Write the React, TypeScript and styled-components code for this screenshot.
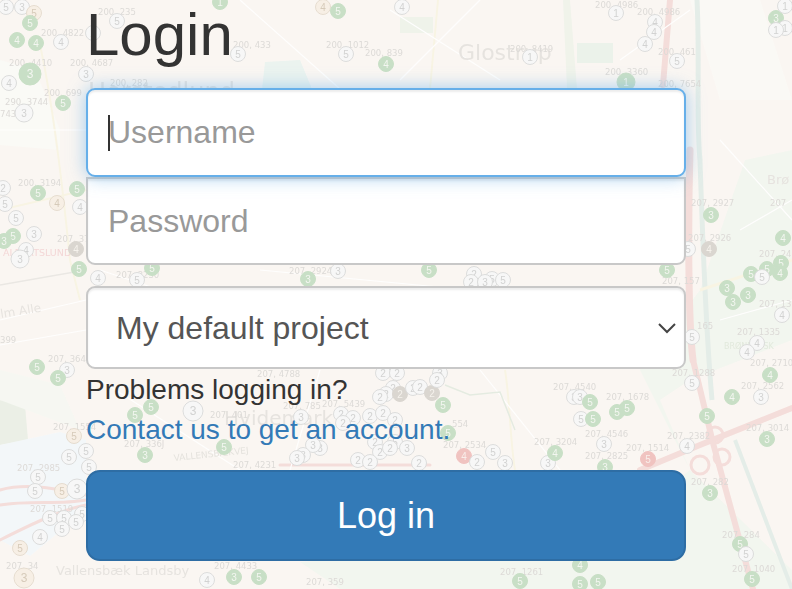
import { useState } from "react";
import styled, { createGlobalStyle } from "styled-components";

const GlobalStyle = createGlobalStyle`
   html, body {
      margin: 0;
      padding: 0;
      height: 100%;
      overflow: hidden;
      background: #faf6f2;
      font-family: "Liberation Sans", Arial, sans-serif;
   }
`;

const Page = styled.div`
   position: relative;
   width: 792px;
   height: 589px;
   overflow: hidden;
`;

const MapLayer = styled.svg`
   position: absolute;
   inset: 0;
   width: 792px;
   height: 589px;
`;

const LoginForm = styled.form`
   position: relative;
   box-sizing: border-box;
   width: 600px;
   margin-left: 86px;
   padding-top: 2px;
   display: flex;
   flex-direction: column;
`;

const Title = styled.h1`
   margin: 0 0 17px;
   font-size: 60px;
   font-weight: 400;
   line-height: 66px;
   height: 69px;
   color: #333;
`;

const TextInput = styled.input<{ $focused?: boolean }>`
   box-sizing: border-box;
   display: block;
   width: 100%;
   height: ${(p) => (p.$focused ? "89px" : "88px")};
   padding: 0 20px;
   font: 32px "Liberation Sans", Arial, sans-serif;
   color: #555;
   background: #fff;
   outline: none;
   border-radius: ${(p) => (p.$focused ? "9px" : "0 0 9px 9px")};
   border: 2px solid ${(p) => (p.$focused ? "#66afe9" : "#c8c8c8")};
   box-shadow: ${(p) =>
      p.$focused
         ? "inset 0 2px 2px rgba(0,0,0,.075), 0 0 18px rgba(102,175,233,.6)"
         : "inset 0 2px 2px rgba(0,0,0,.075)"};
   position: ${(p) => (p.$focused ? "relative" : "static")};
   z-index: ${(p) => (p.$focused ? 1 : "auto")};
   caret-color: #333;

   &::placeholder {
      color: #999;
      opacity: 1;
   }
`;

const Caret = styled.span`
   position: absolute;
   z-index: 2;
   left: 22px;
   top: 115px;
   width: 2px;
   height: 36px;
   background: #333;
`;

const SelectWrap = styled.div`
   position: relative;
   margin-top: 21px;
`;

const ProjectSelect = styled.select`
   box-sizing: border-box;
   display: block;
   width: 100%;
   height: 83px;
   padding: 0 28px;
   font: 32px "Liberation Sans", Arial, sans-serif;
   color: #555;
   background: #fff;
   border: 2px solid #c8c8c8;
   border-radius: 9px;
   box-shadow: inset 0 2px 2px rgba(0, 0, 0, 0.075);
   appearance: none;
   outline: none;
`;

const Chevron = styled.svg`
   position: absolute;
   right: 9px;
   top: 36px;
   width: 20px;
   height: 12px;
   pointer-events: none;
`;

const HelpText = styled.div`
   margin-top: 1px;
   font-size: 28px;
   line-height: 40px;
   color: #333;
`;

const HelpLink = styled.a`
   display: block;
   font-size: 28px;
   line-height: 40px;
   color: #337ab7;
   text-decoration: none;
`;

const SubmitButton = styled.button`
   box-sizing: border-box;
   width: 100%;
   height: 91px;
   margin-top: 20px;
   font: 36px "Liberation Sans", Arial, sans-serif;
   color: #fff;
   background: #337ab7;
   border: 2px solid #2e6da4;
   border-radius: 14px;
`;

type Marker = [number, number, number, "g" | "w" | "r" | "b" | "o", number?];

const markers: Marker[] = [
   // top left
   [6, 7, 5, "w"], [22, 7, 3, "w"], [34, 13, 5, "o"], [30, 23, 5, "g"], [17, 40, 4, "g"], [36, 43, 4, "g"],
   [61, 42, 4, "w"], [30, 74, 3, "g", 11], [9, 83, 4, "w"], [86, 74, 3, "w"], [63, 103, 5, "g"], [24, 113, 3, "w", 9],
   [93, 33, 2, "w"], [117, 21, 5, "w"], [220, 2, 1, "g"],
   // left of the fields
   [3, 188, 2, "w"], [5, 204, 5, "w"], [38, 193, 5, "g"], [77, 189, 5, "g"], [57, 203, 4, "o"], [80, 207, 4, "w"],
   [16, 218, 5, "w"], [34, 234, 3, "w"], [13, 236, 5, "g"], [4, 241, 3, "g"], [26, 250, 4, "w"], [20, 259, 3, "w", 9],
   [76, 249, 4, "b"], [79, 269, 5, "g"],
   // top middle and right
   [238, 54, 5, "w"], [346, 54, 5, "w"], [323, 7, 4, "o"], [338, 11, 5, "g"], [386, 64, 4, "g"], [402, 7, 4, "w"],
   [616, 13, 1, "w"], [655, 22, 4, "w"], [654, 32, 4, "w"], [645, 44, 4, "w"], [530, 57, 1, "w"], [677, 61, 5, "w"],
   [626, 82, 1, "g", 9], [776, 18, 3, "g"], [785, 6, 1, "w"], [785, 28, 1, "w"], [776, 30, 1, "w"],
   // right of the fields
   [711, 215, 3, "g"], [709, 249, 4, "b"], [688, 249, 5, "w"], [783, 238, 4, "g"], [781, 263, 5, "g"], [767, 269, 5, "g"],
   [751, 274, 5, "g"], [762, 277, 5, "w"], [780, 273, 4, "g"], [727, 288, 3, "g"], [748, 295, 3, "g"], [733, 302, 3, "g"],
   [782, 315, 4, "w"], [692, 337, 5, "w"], [757, 343, 4, "w"], [747, 352, 4, "w"], [770, 375, 4, "g"], [692, 383, 5, "w"],
   [732, 397, 4, "g"], [761, 397, 3, "w"], [707, 416, 5, "g"], [767, 439, 3, "g"], [687, 446, 4, "w"], [648, 459, 5, "r"],
   [710, 493, 3, "g"], [740, 544, 5, "g"], [746, 554, 5, "w"], [752, 579, 5, "g"], [598, 582, 5, "g"], [580, 584, 5, "g"],
   [580, 565, 4, "g"], [574, 397, 3, "w"], [580, 397, 3, "w"], [590, 402, 5, "g"], [617, 412, 5, "g"], [627, 408, 5, "g"],
   [581, 419, 5, "w"], [593, 419, 5, "g"], [604, 444, 3, "w"], [605, 467, 3, "g"],
   // lower left
   [37, 367, 5, "g"], [67, 370, 3, "w"], [58, 378, 5, "g"], [135, 415, 5, "g"], [151, 407, 5, "g"], [193, 411, 3, "w", 10],
   [145, 455, 3, "g"], [224, 447, 5, "g"], [74, 436, 5, "o"], [86, 451, 5, "w"], [69, 457, 5, "w"], [89, 467, 5, "w"],
   [38, 477, 5, "w"], [35, 491, 5, "w"], [62, 491, 5, "o"], [77, 489, 3, "w", 10], [82, 514, 5, "w"], [50, 518, 5, "w"],
   [64, 518, 5, "w"], [76, 522, 5, "w"], [62, 529, 5, "w"], [40, 537, 4, "w"], [20, 548, 5, "o"], [24, 578, 3, "o", 10],
   [207, 580, 4, "w"], [234, 577, 3, "g"], [259, 577, 5, "g"],
   // band between select and button
   [443, 405, 5, "g"], [448, 433, 5, "g"], [464, 456, 4, "r"], [493, 452, 5, "w"], [505, 463, 3, "w"], [548, 463, 3, "w"],
   [555, 453, 4, "g"], [477, 462, 2, "w"], [520, 581, 5, "g"],
   [383, 373, 2, "w"], [397, 373, 2, "w"], [393, 388, 2, "w"], [386, 394, 2, "w"], [380, 397, 2, "w"], [400, 394, 2, "b"],
   [413, 388, 2, "w"], [420, 387, 2, "w"], [432, 393, 2, "b"], [440, 373, 3, "w"], [437, 380, 2, "w"],
   [341, 414, 2, "w"], [353, 418, 2, "w"], [370, 416, 2, "w"], [383, 413, 2, "w"], [395, 420, 2, "w"], [343, 423, 2, "w"],
   [301, 417, 3, "w"], [320, 448, 3, "w"], [313, 445, 3, "w"], [303, 455, 3, "w"], [297, 458, 3, "w"], [375, 442, 2, "w"],
   [395, 442, 5, "w"], [407, 448, 3, "w"], [380, 452, 2, "w"], [390, 448, 2, "w"], [419, 463, 2, "w"], [358, 460, 2, "w"],
   [370, 462, 2, "w"],
   // band between password and select
   [98, 278, 4, "w"], [152, 268, 5, "g"], [137, 280, 5, "w"], [338, 271, 3, "w"], [308, 279, 3, "g"], [429, 270, 5, "g"],
   [474, 274, 2, "w"], [492, 279, 5, "w"], [471, 282, 2, "w"], [485, 282, 3, "w"], [503, 280, 5, "w"], [667, 270, 5, "g"],
];

const labels: [number, number, string][] = [
   [98, 15, "200, 235"], [41, 36, "200, 4822"], [9, 66, "200, 4410"], [70, 66, "200, 4687"], [44, 96, "200, 699"],
   [5, 105, "290, 3744"], [0, 117, "743"], [233, 48, "200, 433"], [326, 48, "200, 1012"], [365, 56, "200, 839"],
   [18, 186, "200, 3194"], [57, 242, "207, 37"], [110, 86, "200, 282"], [0, 343, "399"], [48, 362, "207, 3644"],
   [116, 278, "207, 3230"], [289, 274, "207, 2924"], [691, 206, "207, 2927"], [688, 241, "207, 2926"],
   [770, 206, "207"], [759, 257, "207, 24"], [662, 284, "207, 157"], [759, 307, "207, 13"], [737, 335, "207, 1335"],
   [750, 366, "207, 2710"], [741, 389, "207, 2562"], [672, 376, "207, 1288"], [553, 390, "207, 4540"], [606, 400, "207, 1678"],
   [585, 437, "207, 4546"], [626, 451, "207, 1514"], [667, 439, "207, 2382"], [585, 459, "207, 2825"], [746, 431, "207, 3014"],
   [691, 485, "207, 282"], [722, 538, "207, 284"], [732, 572, "207, 1040"], [697, 329, "165"],
   [283, 409, "207, 785"], [322, 407, "207, 5439"], [452, 427, "554"], [443, 448, "207, 2534"], [534, 445, "207, 3204"],
   [257, 377, "207, 4788"], [595, 8, "200, 4986"], [637, 15, "200, 4986"], [510, 52, "200, 8419"], [605, 75, "200, 3360"],
   [658, 55, "200, 461"], [658, 87, "200, 7654"], [17, 471, "207, 2985"], [30, 512, "207, 1519"], [53, 430, "207, 1554"],
   [124, 447, "207, 336J"], [210, 418, "207, 401"], [6, 569, "207, 34"], [214, 569, "207, 4433"], [306, 585, "207, 359"],
   [500, 575, "207, 1261"], [233, 468, "207, 4231"],
];

const placeNames: [number, number, string, number][] = [
   [458, 60, "Glostrup", 22],
   [56, 575, "Vallensbæk Landsby", 13],
   [224, 425, "Hvidemark", 20],
   [767, 184, "Brø", 13],
   [88, 100, "Herstedlund", 24],
];

const markerStyle = {
   g: { fill: "#c2dcc0", stroke: "#c2dcc0", text: "#f3f7f1" },
   w: { fill: "#f7f8f8", stroke: "#d8d9d9", text: "#cdcece" },
   r: { fill: "#efbcba", stroke: "#efbcba", text: "#f9eeea" },
   b: { fill: "#d6d2cc", stroke: "#d6d2cc", text: "#f5f2ec" },
   o: { fill: "#f7efe4", stroke: "#e3d9cb", text: "#d2c5b2" },
};

const ChevronIcon = () => (
   <Chevron viewBox="0 0 20 12">
      <path d="M2 2 L10 10 L18 2" fill="none" stroke="#444" strokeWidth="2" />
   </Chevron>
);

const CityMap = () => (
   <MapLayer viewBox="0 0 792 589">
      <defs>
         <filter id="soft">
            <feGaussianBlur stdDeviation="0.45" />
         </filter>
      </defs>
      <rect width="792" height="589" fill="#faf6f2" />
      <g filter="url(#soft)" opacity="0.88">
         {/* parks and woods */}
         <path d="M0 60 L35 70 L60 130 L60 150 L0 145 Z" fill="#fafbf7" />
         <path d="M0 400 L25 405 L28 440 L0 445 Z" fill="#e9efe5" />
         <path d="M0 370 L60 385 L80 430 L0 400 Z" fill="#f6f8f2" />
         <path d="M0 445 L60 432 L86 440 L86 510 L30 556 L0 540 Z" fill="#f3f8fb" />
         <path d="M400 17 L433 17 L433 33 L400 33 Z" fill="#eef3ea" />
         <path d="M563 0 L570 0 L577 89 L567 89 Z" fill="#eff3ea" />
         <path d="M577 43 L613 43 L613 63 L577 63 Z" fill="#eaf2ea" />
         <path d="M265 62 L300 60 L312 89 L262 89 Z" fill="#e9f3ef" />
         <path d="M745 160 L792 150 L792 340 L690 380 L660 400 L690 470 L792 570 L792 589 L340 589 L300 562 L600 540 L690 470 L640 370 L700 290 Z" fill="#f2f6ef" />
         <path d="M690 0 L760 0 L792 100 L720 100 Z" fill="#fbfaf6" />
         {/* motorways */}
         <g fill="none" stroke="#f4dad7" strokeLinecap="round">
            <path d="M670 0 L663 85" strokeWidth="6" />
            <path d="M690 150 C688 220 688 320 693 360" strokeWidth="7" />
            <path d="M693 360 L713 443 L753 589" strokeWidth="6" />
            <path d="M640 470 L700 445 L792 408" strokeWidth="6" />
            <circle cx="715" cy="435" r="8" strokeWidth="3" />
            <circle cx="700" cy="465" r="9" strokeWidth="3" />
            <circle cx="722" cy="457" r="8" strokeWidth="3" />
            <path d="M0 490 C30 482 60 490 86 495" strokeWidth="3" />
            <path d="M0 505 C30 500 60 505 86 500" strokeWidth="3" />
            <path d="M0 540 C30 525 60 510 86 505" strokeWidth="3" />
            <path d="M280 465 L430 465" strokeWidth="3" />
         </g>
         {/* rail and water */}
         <g fill="none" stroke="#e2ece7">
            <path d="M697 0 C700 60 696 120 700 160 C702 220 705 320 712 400" strokeWidth="5" />
            <path d="M735 440 L792 589" strokeWidth="4" />
         </g>
         {/* local roads */}
         <g fill="none" stroke="#f8f4e2" strokeWidth="2">
            <path d="M40 45 C50 90 60 160 70 260 L80 300" />
            <path d="M0 210 L86 190" />
            <path d="M438 0 L430 89" />
            <path d="M700 290 L792 260" strokeWidth="3" />
            <path d="M505 370 C510 400 510 440 515 470" />
            <path d="M590 470 L640 560" />
         </g>
         <g fill="none" stroke="#fff" strokeWidth="1.2">
            <path d="M0 130 L86 130 M0 320 L86 300 M0 345 L86 330 M100 270 L160 290 M240 0 L340 89" />
            <path d="M390 10 L500 80 M480 0 L400 80 M620 60 L690 10 M320 370 L290 470 M480 370 L560 470" />
            <path d="M720 140 L792 220 M740 230 L792 200 M720 320 L792 300 M100 380 L240 470 M260 270 L470 290" />
         </g>
         <path d="M0 285 L86 270" fill="none" stroke="#e8e6e2" strokeWidth="1.5" />
         <path d="M445 385 L470 395 L500 392 L515 430" fill="none" stroke="#e2eadf" strokeWidth="1.5" />
         {/* labels */}
         <g fontFamily="DejaVu Sans, sans-serif">
            {placeNames.map(([x, y, name, size]) => (
               <text key={name} x={x} y={y} fontSize={size} fill="#e4e1dd">
                  {name}
               </text>
            ))}
            <text x="3" y="256" fontSize="9.5" fill="#f3d3d3">ALBERTSLUND</text>
            <text x="724" y="349" fontSize="8" fill="#dfe8da">BRØNDBYSK</text>
            <text x="1" y="318" fontSize="12" fill="#e4e1dd" transform="rotate(-9 1 318)">lm Alle</text>
            <text x="174" y="461" fontSize="9" fill="#e2e0db" transform="rotate(-6 174 461)">VALLENSBÆKVEJ</text>
            {labels.map(([x, y, t]) => (
               <text key={`${x}-${y}`} x={x} y={y} fontSize="8.5" fill="#d9d7d4">
                  {t}
               </text>
            ))}
         </g>
         {markers.map(([x, y, n, kind, r], i) => {
            const s = markerStyle[kind];
            const radius = r ?? 7.5;
            return (
               <g key={i}>
                  <circle cx={x} cy={y} r={radius} fill={s.fill} stroke={s.stroke} strokeWidth="1" />
                  <text
                     x={x}
                     y={y + 3.5}
                     fontSize={radius >= 10 ? 12 : 10}
                     textAnchor="middle"
                     fontFamily="Liberation Sans, sans-serif"
                     fill={s.text}
                  >
                     {n}
                  </text>
               </g>
            );
         })}
      </g>
   </MapLayer>
);

export default function App() {
   const [project, setProject] = useState("default");
   return (
      <Page>
         <GlobalStyle />
         <CityMap />
         <LoginForm onSubmit={(e) => e.preventDefault()}>
            <Title>Login</Title>
            <Caret />
            <TextInput $focused type="text" placeholder="Username" />
            <TextInput type="password" placeholder="Password" />
            <SelectWrap>
               <ProjectSelect value={project} onChange={(e) => setProject(e.target.value)}>
                  <option value="default">My default project</option>
               </ProjectSelect>
               <ChevronIcon />
            </SelectWrap>
            <HelpText>Problems logging in?</HelpText>
            <HelpLink href="#contact">Contact us to get an account.</HelpLink>
            <SubmitButton type="submit">Log in</SubmitButton>
         </LoginForm>
      </Page>
   );
}
